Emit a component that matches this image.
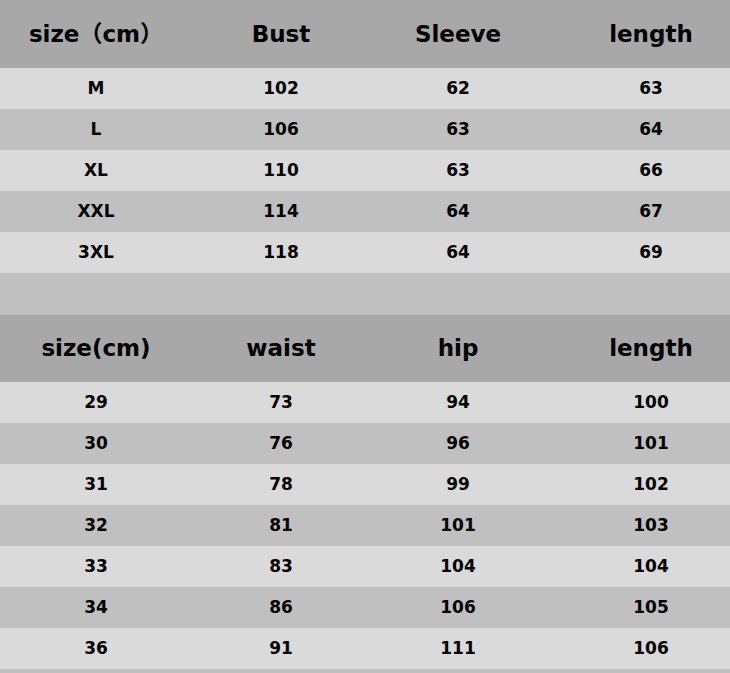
import React from "react";

const top = {
  head: ["size（cm）", "Bust", "Sleeve", "length"],
  rows: [
    ["M", "102", "62", "63"],
    ["L", "106", "63", "64"],
    ["XL", "110", "63", "66"],
    ["XXL", "114", "64", "67"],
    ["3XL", "118", "64", "69"],
  ],
};

const bottom = {
  head: ["size(cm)", "waist", "hip", "length"],
  rows: [
    ["29", "73", "94", "100"],
    ["30", "76", "96", "101"],
    ["31", "78", "99", "102"],
    ["32", "81", "101", "103"],
    ["33", "83", "104", "104"],
    ["34", "86", "106", "105"],
    ["36", "91", "111", "106"],
  ],
};

const cols = "grid grid-cols-[192px_178px_176px_1fr] items-center";

function Table({ data, headH }: { data: { head: string[]; rows: string[][] }; headH: string }) {
  return (
    <div>
      <div className={`${cols} ${headH} bg-[#a8a8a8] text-[23px]`}>
        {data.head.map((h, i) => (
          <div key={i} className={`text-center ${i === 3 ? "pl-[26px]" : ""}`}>
            {h}
          </div>
        ))}
      </div>
      {data.rows.map((r, ri) => (
        <div
          key={ri}
          className={`${cols} h-[41px] text-[17px] ${ri % 2 === 0 ? "bg-[#dadada]" : "bg-[#c0c0c0]"}`}
        >
          {r.map((c, i) => (
            <div key={i} className={`text-center ${i === 3 ? "pl-[26px]" : ""}`}>
              {c}
            </div>
          ))}
        </div>
      ))}
    </div>
  );
}

export default function App() {
  return (
    <div
      className="w-[730px] h-[673px] overflow-hidden bg-[#c0c0c0] text-black font-bold"
      style={{ fontFamily: '"DejaVu Sans", "Noto Sans CJK SC", sans-serif' }}
    >
      <Table data={top} headH="h-[68px]" />
      <div className="h-[42px] bg-[#c0c0c0]" />
      <Table data={bottom} headH="h-[67px]" />
    </div>
  );
}
